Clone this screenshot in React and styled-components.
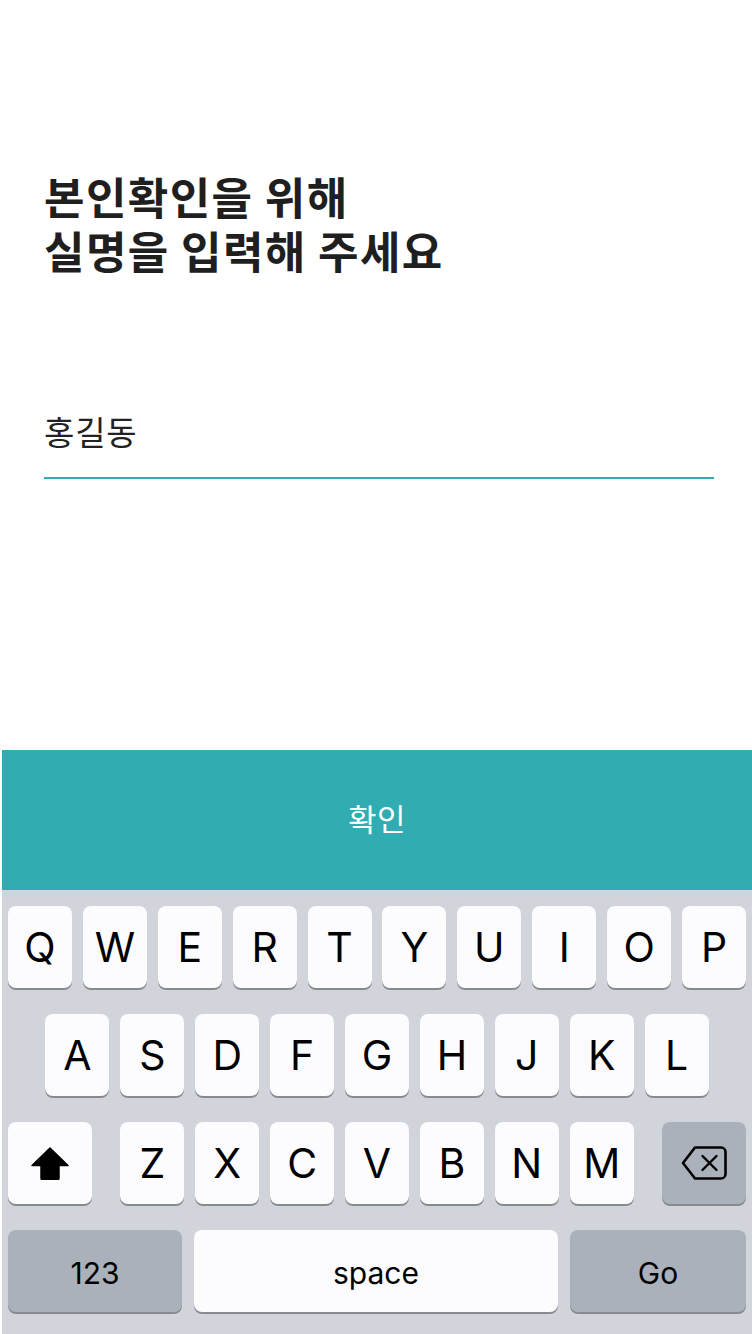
import React from 'react';
import styled, { createGlobalStyle } from 'styled-components';

const GlobalStyle = createGlobalStyle`
  html, body {
    margin: 0;
    padding: 0;
    background: #ffffff;
  }

  body {
    font-family: "Noto Sans CJK KR", "Noto Sans", sans-serif;
  }

  * {
    box-sizing: border-box;
  }
`;

const rows = [
  ['Q', 'W', 'E', 'R', 'T', 'Y', 'U', 'I', 'O', 'P'],
  ['A', 'S', 'D', 'F', 'G', 'H', 'J', 'K', 'L'],
  ['Z', 'X', 'C', 'V', 'B', 'N', 'M'],
];

const ShiftIcon = () => (
  <svg width="38" height="33" viewBox="0 0 38 33">
    <path
      d="M19 1 L37 18.5 H28 V31 a2 2 0 0 1 -2 2 H12 a2 2 0 0 1 -2 -2 V18.5 H1 Z"
      fill="#000"
      stroke="#000"
      strokeWidth="1.5"
      strokeLinejoin="round"
    />
  </svg>
);

const BackspaceIcon = () => (
  <svg width="46" height="34" viewBox="0 0 46 34" fill="none">
    <path
      d="M14 1.5 H40 a4.5 4.5 0 0 1 4.5 4.5 V28 a4.5 4.5 0 0 1 -4.5 4.5 H14 L2 17 Z"
      stroke="#000"
      strokeWidth="2.6"
      strokeLinejoin="round"
    />
    <path
      d="M21.5 10 L35.5 24 M35.5 10 L21.5 24"
      stroke="#000"
      strokeWidth="2.4"
      strokeLinecap="round"
    />
  </svg>
);

const App = () => {
  return (
    <Page>
      <GlobalStyle />
      <Content>
        <Title>
          본인확인을 위해
          <br />
          실명을 입력해 주세요
        </Title>
        <NameInput type="text" defaultValue="홍길동" aria-label="실명" />
      </Content>

      <ConfirmButton type="button">확인</ConfirmButton>

      <Keyboard>
        <KeyRow>
          {rows[0].map((k) => (
            <Key key={k} $fill>{k}</Key>
          ))}
        </KeyRow>
        <KeyRow $center>
          {rows[1].map((k) => (
            <Key key={k}>{k}</Key>
          ))}
        </KeyRow>
        <KeyRow $spread>
          <Key $wide="84px">
            <ShiftIcon />
          </Key>
          <KeyGroup>
            {rows[2].map((k) => (
              <Key key={k}>{k}</Key>
            ))}
          </KeyGroup>
          <Key $wide="84px" $dark>
            <BackspaceIcon />
          </Key>
        </KeyRow>
        <KeyRow $bottom>
          <Key $wide="174px" $dark $small>123</Key>
          <Key $fill $small>space</Key>
          <Key $wide="176px" $dark $small>Go</Key>
        </KeyRow>
      </Keyboard>
    </Page>
  );
};

const Page = styled.div`
  display: flex;
  flex-direction: column;
  min-height: 1334px;
  background: #ffffff;
`;

const Content = styled.div`
  flex: 1;
  display: flex;
  flex-direction: column;
  padding: 169px 38px 0 44px;
`;

const Title = styled.h1`
  margin: 0;
  font-family: "Noto Sans CJK KR", sans-serif;
  font-size: 44px;
  font-weight: 700;
  line-height: 54px;
  letter-spacing: 1.4px;
  color: #1f1f1f;
`;

const NameInput = styled.input`
  margin-top: 134px;
  width: 100%;
  height: 40px;
  padding: 0 0 26px;
  border: none;
  border-bottom: 2px solid #31acb3;
  outline: none;
  background: transparent;
  font-family: "Noto Sans CJK KR", sans-serif;
  font-size: 33px;
  line-height: 40px;
  letter-spacing: 0.8px;
  color: #222222;
  box-sizing: content-box;
`;

const ConfirmButton = styled.button`
  display: flex;
  align-items: center;
  justify-content: center;
  height: 140px;
  margin: 0 0 0 2px;
  padding: 0 0 5px;
  border: none;
  background: #31acb3;
  font-family: "Noto Sans CJK KR", sans-serif;
  font-size: 31px;
  font-weight: 400;
  letter-spacing: 0.6px;
  color: #ffffff;
`;

const Keyboard = styled.div`
  display: flex;
  flex-direction: column;
  gap: 26px;
  height: 444px;
  margin-left: 2px;
  padding: 16px 6px 22px;
  background: #d1d4da;
`;

const KeyRow = styled.div`
  display: flex;
  justify-content: ${({ $center, $spread }) =>
    $center ? 'center' : $spread ? 'space-between' : 'flex-start'};
  gap: ${({ $bottom, $spread }) => ($spread ? '0' : $bottom ? '12px' : '10.9px')};
`;

const KeyGroup = styled.div`
  display: flex;
  gap: 10.9px;
`;

const Key = styled.div`
  display: flex;
  align-items: center;
  justify-content: center;
  flex: ${({ $fill }) => ($fill ? '1' : 'none')};
  width: ${({ $wide, $fill }) => ($fill ? 'auto' : $wide || '64px')};
  height: 82px;
  padding-top: ${({ $small }) => ($small ? '3px' : '0')};
  border-radius: 8px;
  background: ${({ $dark }) => ($dark ? '#abb1ba' : '#fcfcfe')};
  box-shadow: 0 2px 0 #898a8e;
  font-family: Inter, "Liberation Sans", sans-serif;
  font-size: ${({ $small }) => ($small ? '30px' : '41px')};
  font-weight: 400;
  color: #000000;
`;

export default App;
